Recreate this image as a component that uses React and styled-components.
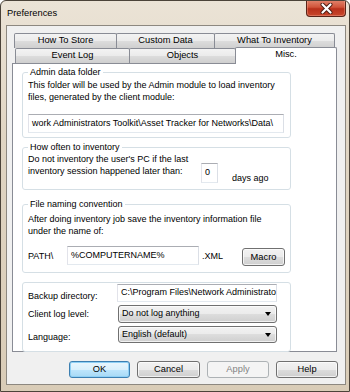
import styled, { createGlobalStyle } from "styled-components";

const GlobalStyle = createGlobalStyle`
  html, body {
    margin: 0;
    padding: 0;
  }
  body {
    font-family: "Liberation Sans", Arial, sans-serif;
    font-size: 9px;
    color: #000;
  }
`;

const Window = styled.div`
  width: 350px;
  height: 392px;
  box-sizing: border-box;
  display: flex;
  flex-direction: column;
  background: linear-gradient(180deg, #ebe3d6 0%, #e0d5c3 35%, #d9ccb7 100%);
  border: 1px solid #4b4339;
  border-radius: 6px 6px 0 0;
  overflow: hidden;
`;

const TitleBar = styled.div`
  height: 24px;
  display: flex;
  justify-content: space-between;
  align-items: flex-start;
  flex: none;
`;

const Title = styled.div`
  margin: 6px 0 0 6px;
  line-height: 12px;
  font-size: 9.3px;
`;

const CloseButton = styled.div`
  width: 40px;
  height: 17px;
  margin: -1px 3px 0 0;
  box-sizing: border-box;
  display: flex;
  align-items: center;
  justify-content: center;
  border: 1px solid #5a2318;
  border-top: none;
  border-radius: 0 0 4px 4px;
  background: linear-gradient(180deg, #e2866f 0%, #d1543a 45%, #b8301a 55%, #c8472c 100%);
  box-shadow: inset 0 0 0 1px rgba(255, 190, 170, 0.35);
`;

const Client = styled.div`
  flex: 1;
  margin: 0 3px 6px 5px;
  border: 1px solid #8d8880;
  background: #f0f0f0;
  display: flex;
  flex-direction: column;
`;

const TabStrip = styled.div`
  padding-top: 7px;
  display: flex;
  flex-direction: column;
`;

const TabRow = styled.div`
  display: flex;
  align-items: flex-end;
  height: 15px;
  padding-left: ${(p) => p.$offset}px;
`;

const Tab = styled.div`
  width: ${(p) => p.$w}px;
  height: 15px;
  box-sizing: border-box;
  margin-right: -1px;
  border: 1px solid #898c95;
  border-bottom: none;
  border-radius: 2px 2px 0 0;
  background: linear-gradient(180deg, #f3f3f3 0%, #ebebeb 50%, #dddddd 50%, #cfcfcf 100%);
  text-align: center;
  font-size: 9.3px;
  line-height: 13px;
  white-space: nowrap;
`;

const ActiveTab = styled(Tab)`
  height: 17px;
  margin-top: -1px;
  margin-bottom: -1px;
  position: relative;
  z-index: 1;
  background: #fff;
  line-height: 12px;
`;

const Panel = styled.div`
  margin-left: 5px;
  width: 325px;
  height: 289px;
  box-sizing: border-box;
  border: 1px solid #898c95;
  background: #fff;
  padding: 3px 0 0 9px;
  display: flex;
  flex-direction: column;
`;

const Group = styled.fieldset`
  width: 269px;
  box-sizing: border-box;
  margin: ${(p) => p.$mt || 0}px 0 0 0;
  padding: ${(p) => p.$pt}px 5px ${(p) => p.$pb}px 5px;
  border: 1px solid #d5dfe5;
  border-radius: 3px;
  min-width: 0;
`;

const Legend = styled.legend`
  padding: 0 2px;
  line-height: 10px;
`;

const Text = styled.div`
  line-height: 12px;
  white-space: nowrap;
`;

const TextBox = styled.div`
  width: ${(p) => p.$w}px;
  height: ${(p) => p.$h}px;
  margin-top: ${(p) => p.$mt || 0}px;
  box-sizing: border-box;
  flex: none;
  border: 1px solid #e3e9ef;
  border-top-color: #abadb3;
  border-left-color: #e2e3ea;
  border-right-color: #dbdfe6;
  background: #fff;
  padding: 0 3px;
  line-height: ${(p) => p.$h - 3}px;
  white-space: nowrap;
  overflow: hidden;
`;

const Row = styled.div`
  display: flex;
  align-items: flex-start;
  margin-top: ${(p) => p.$mt || 0}px;
`;

const DaysLabel = styled.div`
  margin: 19px 0 0 14px;
  line-height: 12px;
`;

const PathLabel = styled.div`
  width: ${(p) => p.$w}px;
  margin-left: ${(p) => p.$ml || 0}px;
  padding-top: 4px;
  line-height: 12px;
  flex: none;
`;

const PushButton = styled.div`
  width: ${(p) => p.$w}px;
  height: ${(p) => p.$h || 17}px;
  margin-top: ${(p) => p.$mt || 0}px;
  box-sizing: border-box;
  flex: none;
  border: 1px solid #707070;
  border-radius: 3px;
  background: linear-gradient(180deg, #f2f2f2 0%, #ebebeb 50%, #dddddd 50%, #cfcfcf 100%);
  box-shadow: inset 0 0 0 1px rgba(255, 255, 255, 0.7);
  text-align: center;
  font-size: 9.3px;
  line-height: ${(p) => (p.$h || 17) - 2}px;
  color: #000;

  ${(p) =>
    p.$default &&
    `
    border-color: #3c7fb1;
    background: linear-gradient(180deg, #eaf6fd 0%, #d9f0fc 50%, #bee6fd 50%, #a7d9f5 100%);
    box-shadow: inset 0 0 0 1px #8fd0f5;
  `}

  ${(p) =>
    p.$disabled &&
    `
    border-color: #adb2b5;
    background: #f4f4f4;
    box-shadow: none;
    color: #838383;
  `}
`;

const SettingsGrid = styled.div`
  display: grid;
  grid-template-columns: 89px 160px;
  grid-template-rows: 18px 18px 17px;
  row-gap: 3px;
`;

const SettingLabel = styled.div`
  align-self: end;
  line-height: 12px;
  padding-bottom: ${(p) => p.$pb || 0}px;
`;

const Combo = styled.div`
  position: relative;
  margin-left: 1px;
  box-sizing: border-box;
  border: 1px solid #707070;
  border-radius: 3px;
  background: linear-gradient(180deg, #f2f2f2 0%, #ebebeb 50%, #dddddd 50%, #cfcfcf 100%);
  box-shadow: inset 0 0 0 1px rgba(255, 255, 255, 0.7);
  padding-left: 3px;
  line-height: ${(p) => p.$h - 3}px;

  &::after {
    content: "";
    position: absolute;
    right: 5px;
    top: 50%;
    margin-top: -2px;
    border-left: 3.5px solid transparent;
    border-right: 3.5px solid transparent;
    border-top: 4px solid #000;
  }
`;

const ButtonBar = styled.div`
  display: flex;
  justify-content: flex-end;
  gap: 7px;
  margin-top: 9px;
  padding-right: 7px;
`;

const CloseIcon = () => (
  <svg width="13" height="11" viewBox="0 0 13 11">
    <path d="M2.5 1.5 L10.5 9.5 M10.5 1.5 L2.5 9.5" stroke="#4a1a10" strokeWidth="4" strokeLinecap="round" />
    <path d="M2.5 1.5 L10.5 9.5 M10.5 1.5 L2.5 9.5" stroke="#fff" strokeWidth="2.2" strokeLinecap="round" />
  </svg>
);

export default function App() {
  return (
    <>
      <GlobalStyle />
      <Window>
        <TitleBar>
          <Title>Preferences</Title>
          <CloseButton>
            <CloseIcon />
          </CloseButton>
        </TitleBar>
        <Client>
          <TabStrip>
            <TabRow $offset={7}>
              <Tab $w={103}>How To Store</Tab>
              <Tab $w={99}>Custom Data</Tab>
              <Tab $w={121}>What To Inventory</Tab>
            </TabRow>
            <TabRow $offset={8}>
              <Tab $w={115}>Event Log</Tab>
              <Tab $w={107}>Objects</Tab>
              <ActiveTab $w={102}>Misc.</ActiveTab>
            </TabRow>
          </TabStrip>
          <Panel>
            <Group $pt={2} $pb={4}>
              <Legend>Admin data folder</Legend>
              <Text>
                This folder will be used by the Admin module to load inventory
                <br />
                files, generated by the client module:
              </Text>
              <TextBox $w={256} $h={19} $mt={11}>
                work Administrators Toolkit\Asset Tracker for Networks\Data\
              </TextBox>
            </Group>

            <Group $mt={4} $pt={1} $pb={5}>
              <Legend>How often to inventory</Legend>
              <Row>
                <Text style={{ width: 173, flex: "none" }}>
                  Do not inventory the user's PC if the last
                  <br />
                  inventory session happened later than:
                </Text>
                <TextBox $w={17} $h={20} $mt={10}>
                  0
                </TextBox>
                <DaysLabel>days ago</DaysLabel>
              </Row>
            </Group>

            <Group $mt={9} $pt={4} $pb={6}>
              <Legend>File naming convention</Legend>
              <Text>
                After doing inventory job save the inventory information file
                <br />
                under the name of:
              </Text>
              <Row $mt={9}>
                <PathLabel $w={39}>PATH\</PathLabel>
                <TextBox $w={132} $h={19}>
                  %COMPUTERNAME%
                </TextBox>
                <PathLabel $w={40} $ml={3}>
                  .XML
                </PathLabel>
                <PushButton $w={43} $h={18} $mt={2}>
                  Macro
                </PushButton>
              </Row>
            </Group>

            <Group $mt={9} $pt={1} $pb={8}>
              <SettingsGrid>
                <SettingLabel $pb={0}>Backup directory:</SettingLabel>
                <TextBox $w={160} $h={18}>
                  C:\Program Files\Network Administrato
                </TextBox>
                <SettingLabel $pb={3}>Client log level:</SettingLabel>
                <Combo $h={18}>Do not log anything</Combo>
                <SettingLabel $pb={0}>Language:</SettingLabel>
                <Combo $h={17}>English (default)</Combo>
              </SettingsGrid>
            </Group>
          </Panel>
          <ButtonBar>
            <PushButton $w={61} $default>
              OK
            </PushButton>
            <PushButton $w={63}>Cancel</PushButton>
            <PushButton $w={62} $disabled>
              Apply
            </PushButton>
            <PushButton $w={62}>Help</PushButton>
          </ButtonBar>
        </Client>
      </Window>
    </>
  );
}
